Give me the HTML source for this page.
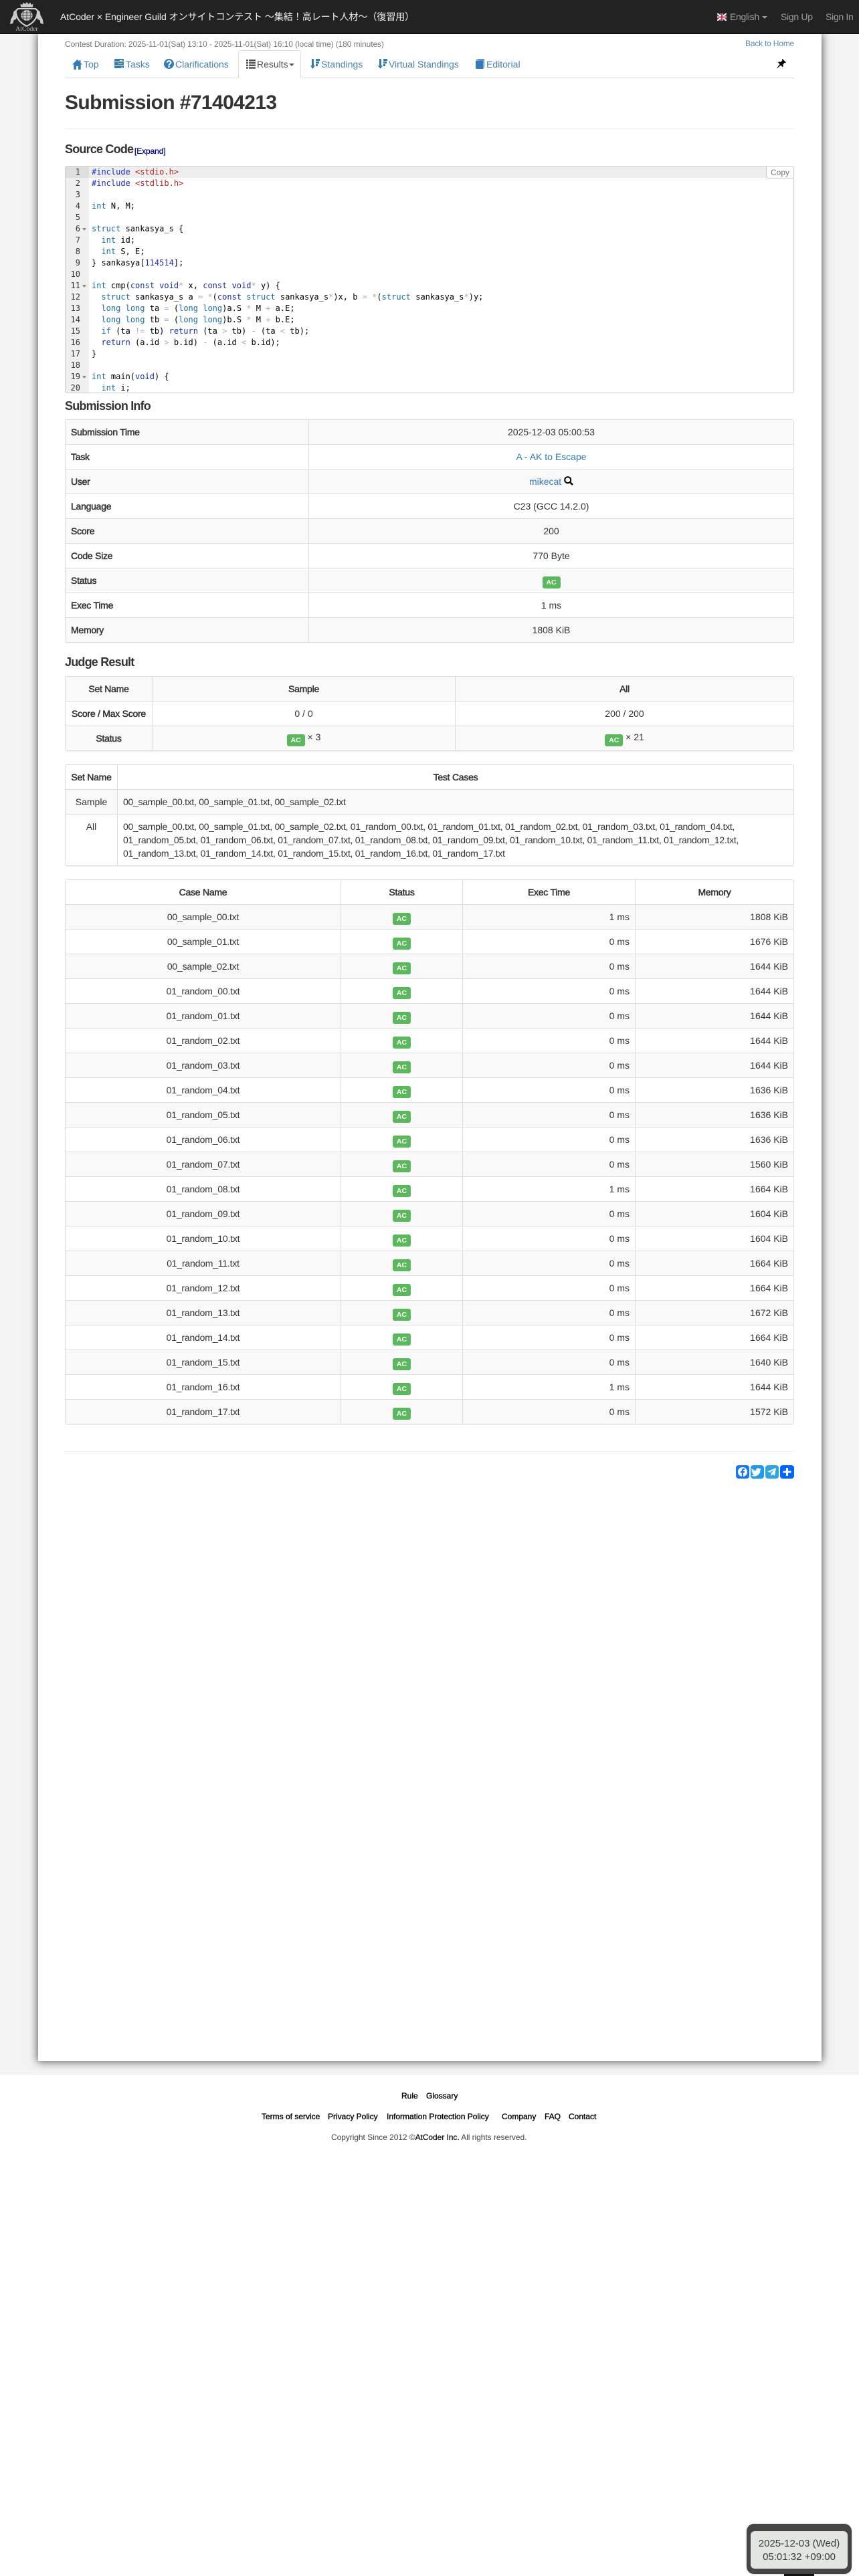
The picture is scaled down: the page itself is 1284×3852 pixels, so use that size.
<!DOCTYPE html>
<html lang="en"><head><meta charset="utf-8"><title>Submission #71404213</title>
<style>
*{box-sizing:border-box}
html,body{margin:0;padding:0;background:#fff}
body{width:1284px;height:3852px;position:relative;overflow:hidden;font:14px/20px "Liberation Sans","Noto Sans CJK JP",sans-serif;color:#333}
.a{position:absolute;white-space:nowrap}
a{color:#337ab7;text-decoration:none}
#bg{left:0;top:51px;width:1284px;height:3052px;background:#f3f3f3}
#main{left:57px;top:51px;width:1171px;height:3031px;background:#fff;box-shadow:0 0 12px 1px #555}
#nav{left:0;top:0;width:1284px;height:51px;background:#222;border-bottom:1px solid #000}
.nl{color:#9d9d9d;letter-spacing:-.3px}
.tab{top:86px;color:#4a82ad}
.ic{position:absolute}
h2,h3{margin:0;font-weight:700;position:absolute;white-space:nowrap}
h2{letter-spacing:-.6px}
h3{font-size:18px;line-height:24px;letter-spacing:-.8px;left:97px;color:#333}
hr{position:absolute;margin:0;border:0;height:1px;background:#eee;left:97px;width:1090px}
#ed{left:97px;top:248px;width:1090px;height:340px;border:1px solid #ccc;border-radius:3px;overflow:hidden;background:#fff;font:12px/17px "DejaVu Sans Mono",monospace;color:#000}
#gut{position:absolute;left:0;top:0;width:35px;height:340px;background:#f0f0f0}
.ln{position:absolute;left:0;width:22px;text-align:right;color:#333;height:17px}
.f{position:absolute;left:25px;width:0;height:0;border-left:3px solid transparent;border-right:3px solid transparent;border-top:4px solid #888}
.cl{position:absolute;left:39px;white-space:pre;height:17px}
.k{color:#1b6ca0}.w{color:#1c2fa6}.s{color:#b02323}.p{color:#1f2fc4}.o{color:#a4adb7}.n{color:#1f2fc4}
table{position:absolute;left:97px;width:1090px;table-layout:fixed;border-collapse:separate;border-spacing:0;border:1px solid #ddd;border-radius:3px;box-shadow:0 1px 1px rgba(0,0,0,.06)}
td,th{height:37px;padding:0 8px;border-top:1px solid #ddd;border-left:1px solid #ddd;font-weight:400;text-align:center;vertical-align:middle;white-space:nowrap}
tr:first-child>*{border-top:0;height:36px}
tr>*:first-child{border-left:0}
th{-webkit-text-stroke:.5px #333;letter-spacing:-.25px}
.st>*{background:#f9f9f9}
.r{text-align:right}.l{text-align:left}
.fn{letter-spacing:-.28px}
#c td:first-child{letter-spacing:-.2px}
b.ac{display:inline-block;width:27px;height:18px;background:#5cb85c;border-radius:3px;color:#fff;font:700 10.5px/18px "Liberation Sans",sans-serif;text-align:center;vertical-align:-3px;letter-spacing:0}
.ft{top:3124px;font-size:12px;color:#000;-webkit-text-stroke:.35px #000}
#clk{left:1116px;top:3774px;width:157px;height:75px;background:#454545;border-radius:11px;box-shadow:0 0 2px rgba(0,0,0,.3)}
#clki{position:absolute;left:6px;top:11px;width:145px;height:56px;background:#e2e5e0;border-radius:6px;text-align:center;font-size:15px;line-height:20px;padding-top:9px;color:#3a3a3a}
</style></head><body>
<div class="a" id="bg"></div>
<div class="a" id="main"></div>
<div class="a" id="nav"></div>

<svg class="ic" style="left:14px;top:2px" width="52" height="47" viewBox="2 0 48 47" preserveAspectRatio="none">
<g fill="#c9c9c9">
<path d="M26 1l2 3 3-2 1 3 3-1-1 5H18l-1-5 3 1 1-3 3 2z"/>
<path d="M14 11h24l3 3c0 10-5 18-15 23-10-5-15-13-15-23z" fill="none" stroke="#d0d0d0" stroke-width="2"/>
<path d="M3 34l1-7 3-6 1-6 3-2 1 3 1 6-2 5-3 1-1 5zM49 34l-1-7-3-6-1-6-3-2-1 3-1 6 2 5 3 1 1 5z"/>
<circle cx="26" cy="21" r="8"/>
</g>
<g stroke="#333" stroke-width=".7" fill="none"><path d="M18 21h16M19 17h14M19 25h14M26 13v16M22 14q-3 7 0 14M30 14q3 7 0 14"/></g>
<text x="26" y="44" text-anchor="middle" font-family="Liberation Serif,serif" font-size="9" fill="#bbb">AtCoder</text>
</svg>
<div class="a" style="left:90px;top:15px;color:#f2f2f2;letter-spacing:-.05px">AtCoder × Engineer Guild オンサイトコンテスト ～集結！高レート人材～（復習用）</div>

<svg class="ic" style="left:1072px;top:20px" width="14" height="11" viewBox="0 0 14 11"><rect width="14" height="11" fill="#2a2f6e"/><path d="M0 0l14 11M14 0L0 11" stroke="#fff" stroke-width="2"/><path d="M7 0v11M0 5.5h14" stroke="#fff" stroke-width="3.4"/><path d="M7 0v11M0 5.5h14" stroke="#c8202f" stroke-width="1.8"/></svg>
<div class="a nl" style="left:1091px;top:15px">English</div>
<div class="a" style="left:1139px;top:24px;width:0;height:0;border-left:4px solid transparent;border-right:4px solid transparent;border-top:4px solid #9d9d9d"></div>
<div class="a nl" style="left:1167px;top:15px">Sign Up</div>
<div class="a nl" style="left:1234px;top:15px">Sign In</div>

<div class="a" style="left:97px;top:56px;font-size:12px;color:#777;letter-spacing:-.1px">Contest Duration: 2025-11-01(Sat) 13:10 - 2025-11-01(Sat) 16:10 (local time) (180 minutes)</div>
<div class="a" style="right:97px;top:55px;font-size:12px;color:#5b8aaf;letter-spacing:-.2px">Back to Home</div>

<div class="a" style="left:97px;top:116px;width:1090px;height:1px;background:#ddd"></div>
<div class="a" style="left:356px;top:75px;width:94px;height:42px;background:#fff;border:1px solid #ddd;border-bottom:0;border-radius:4px 4px 0 0"></div>

<svg class="ic" style="left:108px;top:88px" width="15" height="16" viewBox="0 0 15 16"><path fill="#337ab7" d="M7.5 1L0 8.5h2.3V16h3.7v-5h3v5h3.7V8.5H15l-2.5-2.5V2h-2v2z"/></svg>
<div class="a tab" style="left:125px">Top</div>
<svg class="ic" style="left:171px;top:88px" width="14" height="14" viewBox="0 0 14 14"><path fill="#337ab7" d="M1 0h12a1 1 0 011 1v3H0V1a1 1 0 011-1zM0 5h14v4H0zM0 10h14v3a1 1 0 01-1 1H1a1 1 0 01-1-1z"/><path fill="#fff" d="M8 2h4v1H8zM5 7h7v1H5zM10 12h3v1h-3z"/></svg>
<div class="a tab" style="left:188px">Tasks</div>
<svg class="ic" style="left:245px;top:88px" width="15" height="15" viewBox="0 0 15 15"><circle cx="7.5" cy="7.5" r="7.5" fill="#337ab7"/><path fill="none" stroke="#fff" stroke-width="2.2" d="M4.8 5.6c0-3.2 5.6-3.2 5.6 0 0 2-2.8 2-2.8 4"/><rect x="6.4" y="10.6" width="2.4" height="2.3" fill="#fff"/></svg>
<div class="a tab" style="left:262px;letter-spacing:-.03px">Clarifications</div>
<svg class="ic" style="left:368px;top:89px" width="14" height="14" viewBox="0 0 14 14"><path fill="#555" d="M0 0h3v2.5H0zM4 0h10v2.5H4zM0 3.7h3v2.5H0zM4 3.7h10v2.5H4zM0 7.5h3V10H0zM4 7.5h10V10H4zM0 11.2h3v2.5H0zM4 11.2h10v2.5H4z"/></svg>
<div class="a tab" style="left:384px;color:#555">Results</div>
<div class="a" style="left:432px;top:95px;width:0;height:0;border-left:4px solid transparent;border-right:4px solid transparent;border-top:4px solid #555"></div>
<svg class="ic" style="left:464px;top:88px" width="14" height="15" viewBox="0 0 14 15"><path fill="#337ab7" d="M2 0h3v10h2l-3.5 5L0 10h2zM8 0h6v3H8zM8 4h5v3H8zM8 8h3v3H8z"/></svg>
<div class="a tab" style="left:480px">Standings</div>
<svg class="ic" style="left:565px;top:88px" width="14" height="15" viewBox="0 0 14 15"><path fill="#337ab7" d="M2 0h3v10h2l-3.5 5L0 10h2zM8 0h6v3H8zM8 4h5v3H8zM8 8h3v3H8z"/></svg>
<div class="a tab" style="left:581px;letter-spacing:-.05px">Virtual Standings</div>
<svg class="ic" style="left:711px;top:88px" width="13" height="15" viewBox="0 0 13 15"><path fill="#337ab7" d="M1 1a1 1 0 011-1h11v13h-1V1.500H3V1zM0 2.500L11.500 2v13H2a2 2 0 01-2-2z"/></svg>
<div class="a tab" style="left:727px">Editorial</div>
<svg class="ic" style="left:1161px;top:88px" width="14" height="14" viewBox="0 0 14 14"><path fill="#000" d="M8.5 0l5.5 5.5-1.2.8-1-.6-2.4 2.6.4 3-1.1 1L6 9.5 1 14l-.6-.5L4.700 8 2 5.400l1-1.100 3 .4L8.500 2.300l-.7-1z"/></svg>

<h2 style="left:97px;top:134px;font-size:30px;line-height:40px;color:#333">Submission #71404213</h2>
<hr style="top:192px">
<h3 style="top:211px">Source Code</h3>
<div class="a" style="left:201px;top:216px;font-size:12px;color:#000080;-webkit-text-stroke:.25px #000080;letter-spacing:-.1px">[Expand]</div>

<div class="a" id="ed">
<div class="a" style="left:0;top:0;width:1090px;height:17px;background:#eee"></div>
<div id="gut"></div>
<div class="a" style="left:0;top:0;width:35px;height:17px;background:#dedede"></div>
<div class="ln" style="top:0">1</div><div class="ln" style="top:17px">2</div><div class="ln" style="top:34px">3</div><div class="ln" style="top:51px">4</div><div class="ln" style="top:68px">5</div><div class="ln" style="top:85px">6</div><div class="ln" style="top:102px">7</div><div class="ln" style="top:119px">8</div><div class="ln" style="top:136px">9</div><div class="ln" style="top:153px">10</div><div class="ln" style="top:170px">11</div><div class="ln" style="top:187px">12</div><div class="ln" style="top:204px">13</div><div class="ln" style="top:221px">14</div><div class="ln" style="top:238px">15</div><div class="ln" style="top:255px">16</div><div class="ln" style="top:272px">17</div><div class="ln" style="top:289px">18</div><div class="ln" style="top:306px">19</div><div class="ln" style="top:323px">20</div>
<div class="f" style="top:92px"></div><div class="f" style="top:177px"></div><div class="f" style="top:313px"></div>
<div class="cl" style="top:0"><span class="p">#include</span> <span class="s">&lt;stdio.h&gt;</span></div>
<div class="cl" style="top:17px"><span class="p">#include</span> <span class="s">&lt;stdlib.h&gt;</span></div>
<div class="cl" style="top:51px"><span class="k">int</span> N, M;</div>
<div class="cl" style="top:85px"><span class="k">struct</span> sankasya_s {</div>
<div class="cl" style="top:102px">  <span class="k">int</span> id;</div>
<div class="cl" style="top:119px">  <span class="k">int</span> S, E;</div>
<div class="cl" style="top:136px">} sankasya[<span class="n">114514</span>];</div>
<div class="cl" style="top:170px"><span class="k">int</span> cmp(<span class="w">const</span> <span class="w">void</span><span class="o">*</span> x, <span class="w">const</span> <span class="w">void</span><span class="o">*</span> y) {</div>
<div class="cl" style="top:187px">  <span class="k">struct</span> sankasya_s a <span class="o">=</span> <span class="o">*</span>(<span class="w">const</span> <span class="k">struct</span> sankasya_s<span class="o">*</span>)x, b <span class="o">=</span> <span class="o">*</span>(<span class="k">struct</span> sankasya_s<span class="o">*</span>)y;</div>
<div class="cl" style="top:204px">  <span class="k">long</span> <span class="k">long</span> ta <span class="o">=</span> (<span class="k">long</span> <span class="k">long</span>)a.S <span class="o">*</span> M <span class="o">+</span> a.E;</div>
<div class="cl" style="top:221px">  <span class="k">long</span> <span class="k">long</span> tb <span class="o">=</span> (<span class="k">long</span> <span class="k">long</span>)b.S <span class="o">*</span> M <span class="o">+</span> b.E;</div>
<div class="cl" style="top:238px">  <span class="k">if</span> (ta <span class="o">!=</span> tb) <span class="w">return</span> (ta <span class="o">&gt;</span> tb) <span class="o">-</span> (ta <span class="o">&lt;</span> tb);</div>
<div class="cl" style="top:255px">  <span class="w">return</span> (a.id <span class="o">&gt;</span> b.id) <span class="o">-</span> (a.id <span class="o">&lt;</span> b.id);</div>
<div class="cl" style="top:272px">}</div>
<div class="cl" style="top:306px"><span class="k">int</span> main(<span class="w">void</span>) {</div>
<div class="cl" style="top:323px">  <span class="k">int</span> i;</div>
<div class="a" style="right:-1px;top:-1px;width:42px;height:19px;background:#fff;border:1px solid #ccc;border-radius:0 3px 0 4px;font:12px/18px 'Liberation Sans',sans-serif;color:#777;text-align:center">Copy</div>
</div>

<h3 style="top:595px">Submission Info</h3>
<table style="top:627px"><colgroup><col style="width:363px"><col></colgroup>
<tr class="st"><th class="l">Submission Time</th><td>2025-12-03 05:00:53</td></tr>
<tr><th class="l">Task</th><td><a href="#">A - AK to Escape</a></td></tr>
<tr class="st"><th class="l">User</th><td><a href="#">mikecat</a> <svg width="14" height="14" viewBox="0 0 14 14" style="vertical-align:-1px"><circle cx="5.700" cy="5.700" r="4.500" fill="none" stroke="#000" stroke-width="2"/><path d="M9 9l4 4" stroke="#000" stroke-width="2.600"/></svg></td></tr>
<tr><th class="l">Language</th><td>C23 (GCC 14.2.0)</td></tr>
<tr class="st"><th class="l">Score</th><td>200</td></tr>
<tr><th class="l">Code Size</th><td>770 Byte</td></tr>
<tr class="st"><th class="l">Status</th><td><b class="ac">AC</b></td></tr>
<tr><th class="l">Exec Time</th><td>1 ms</td></tr>
<tr class="st"><th class="l">Memory</th><td>1808 KiB</td></tr>
</table>

<h3 style="top:978px">Judge Result</h3>
<table style="top:1011px"><colgroup><col style="width:129px"><col style="width:453px"><col></colgroup>
<tr class="st"><th>Set Name</th><th>Sample</th><th>All</th></tr>
<tr><th style="padding:0">Score / Max Score</th><td>0 / 0</td><td>200 / 200</td></tr>
<tr class="st"><th>Status</th><td><b class="ac">AC</b> × 3</td><td><b class="ac">AC</b> × 21</td></tr>
</table>

<table style="top:1143px"><colgroup><col style="width:77px"><col></colgroup>
<tr><th style="padding:0">Set Name</th><th>Test Cases</th></tr>
<tr class="st"><td>Sample</td><td class="l fn">00_sample_00.txt, 00_sample_01.txt, 00_sample_02.txt</td></tr>
<tr><td style="height:77px;vertical-align:top;padding-top:8px">All</td><td class="l fn" style="height:77px;vertical-align:top;padding-top:8px">00_sample_00.txt, 00_sample_01.txt, 00_sample_02.txt, 01_random_00.txt, 01_random_01.txt, 01_random_02.txt, 01_random_03.txt, 01_random_04.txt,<br>01_random_05.txt, 01_random_06.txt, 01_random_07.txt, 01_random_08.txt, 01_random_09.txt, 01_random_10.txt, 01_random_11.txt, 01_random_12.txt,<br>01_random_13.txt, 01_random_14.txt, 01_random_15.txt, 01_random_16.txt, 01_random_17.txt</td></tr>
</table>

<table id="c" style="top:1315px"><colgroup><col style="width:411px"><col style="width:182px"><col style="width:258px"><col></colgroup>
<tr><th>Case Name</th><th>Status</th><th>Exec Time</th><th>Memory</th></tr>
<tr class="st"><td>00_sample_00.txt</td><td><b class="ac">AC</b></td><td class="r">1 ms</td><td class="r">1808 KiB</td></tr>
<tr><td>00_sample_01.txt</td><td><b class="ac">AC</b></td><td class="r">0 ms</td><td class="r">1676 KiB</td></tr>
<tr class="st"><td>00_sample_02.txt</td><td><b class="ac">AC</b></td><td class="r">0 ms</td><td class="r">1644 KiB</td></tr>
<tr><td>01_random_00.txt</td><td><b class="ac">AC</b></td><td class="r">0 ms</td><td class="r">1644 KiB</td></tr>
<tr class="st"><td>01_random_01.txt</td><td><b class="ac">AC</b></td><td class="r">0 ms</td><td class="r">1644 KiB</td></tr>
<tr><td>01_random_02.txt</td><td><b class="ac">AC</b></td><td class="r">0 ms</td><td class="r">1644 KiB</td></tr>
<tr class="st"><td>01_random_03.txt</td><td><b class="ac">AC</b></td><td class="r">0 ms</td><td class="r">1644 KiB</td></tr>
<tr><td>01_random_04.txt</td><td><b class="ac">AC</b></td><td class="r">0 ms</td><td class="r">1636 KiB</td></tr>
<tr class="st"><td>01_random_05.txt</td><td><b class="ac">AC</b></td><td class="r">0 ms</td><td class="r">1636 KiB</td></tr>
<tr><td>01_random_06.txt</td><td><b class="ac">AC</b></td><td class="r">0 ms</td><td class="r">1636 KiB</td></tr>
<tr class="st"><td>01_random_07.txt</td><td><b class="ac">AC</b></td><td class="r">0 ms</td><td class="r">1560 KiB</td></tr>
<tr><td>01_random_08.txt</td><td><b class="ac">AC</b></td><td class="r">1 ms</td><td class="r">1664 KiB</td></tr>
<tr class="st"><td>01_random_09.txt</td><td><b class="ac">AC</b></td><td class="r">0 ms</td><td class="r">1604 KiB</td></tr>
<tr><td>01_random_10.txt</td><td><b class="ac">AC</b></td><td class="r">0 ms</td><td class="r">1604 KiB</td></tr>
<tr class="st"><td>01_random_11.txt</td><td><b class="ac">AC</b></td><td class="r">0 ms</td><td class="r">1664 KiB</td></tr>
<tr><td>01_random_12.txt</td><td><b class="ac">AC</b></td><td class="r">0 ms</td><td class="r">1664 KiB</td></tr>
<tr class="st"><td>01_random_13.txt</td><td><b class="ac">AC</b></td><td class="r">0 ms</td><td class="r">1672 KiB</td></tr>
<tr><td>01_random_14.txt</td><td><b class="ac">AC</b></td><td class="r">0 ms</td><td class="r">1664 KiB</td></tr>
<tr class="st"><td>01_random_15.txt</td><td><b class="ac">AC</b></td><td class="r">0 ms</td><td class="r">1640 KiB</td></tr>
<tr><td>01_random_16.txt</td><td><b class="ac">AC</b></td><td class="r">1 ms</td><td class="r">1644 KiB</td></tr>
<tr class="st"><td>01_random_17.txt</td><td><b class="ac">AC</b></td><td class="r">0 ms</td><td class="r">1572 KiB</td></tr>
</table>

<hr style="top:2170px">
<svg class="ic" style="left:1100px;top:2191px" width="87" height="20" viewBox="0 0 87 20">
<rect width="20" height="20" rx="4" fill="#1877f2"/><circle cx="10" cy="10" r="7" fill="#fff"/><path fill="#1877f2" d="M8.800 18v-6.500H7V9h1.800V7.500C8.800 5.600 10 4.700 11.500 4.700h1.600V7h-1.200c-.7 0-1 .4-1 1V9h2.100l-.3 2.500h-1.800V18z"/>
<rect x="22" width="20" height="20" rx="4" fill="#1d9bf0"/><path fill="#fff" d="M38 5.700c-.6.300-1.200.4-1.800.5.600-.4 1.100-1 1.300-1.700-.6.400-1.300.6-2 .8a3.100 3.100 0 00-5.300 2.800c-2.600-.1-4.900-1.400-6.400-3.300-.8 1.400-.4 3.200 1 4.100-.5 0-1-.2-1.400-.4 0 1.500 1 2.800 2.500 3.100-.5.100-.9.100-1.400.1.400 1.200 1.500 2.100 2.900 2.100a6.200 6.200 0 01-4.600 1.300 8.800 8.800 0 0013.600-7.800c.6-.4 1.200-1 1.600-1.600z"/>
<rect x="44" width="20" height="20" rx="4" fill="#2ca5e0"/><path fill="#fff" d="M60 4L47 9.500l3.500 1.500 7-4.500-5 5.500v4l2.500-2.500 3 2.200z"/>
<rect x="66" width="21" height="20" rx="4" fill="#0166ff"/><path fill="#fff" d="M75 4h3v4.500h4.500v3H78V16h-3v-4.500h-4.500v-3H75z"/>
</svg>

<div class="a ft" style="left:600px">Rule</div>
<div class="a ft" style="left:637px">Glossary</div>
<div class="a ft" style="left:391px;top:3155px">Terms of service</div>
<div class="a ft" style="left:490px;top:3155px">Privacy Policy</div>
<div class="a ft" style="left:578px;top:3155px">Information Protection Policy</div>
<div class="a ft" style="left:750px;top:3155px">Company</div>
<div class="a ft" style="left:814px;top:3155px">FAQ</div>
<div class="a ft" style="left:850px;top:3155px">Contact</div>
<div class="a" style="left:495px;top:3186px;font-size:12px;color:#444;letter-spacing:-.06px">Copyright Since 2012 ©<span style="color:#111;-webkit-text-stroke:.25px #111">AtCoder Inc.</span> All rights reserved.</div>

<div class="a" id="clk"><div id="clki">2025-12-03 (Wed)<br>05:01:32 +09:00</div></div>
<div class="a" style="left:1172px;top:3849px;width:45px;height:3px;background:#111"></div>
</body></html>
